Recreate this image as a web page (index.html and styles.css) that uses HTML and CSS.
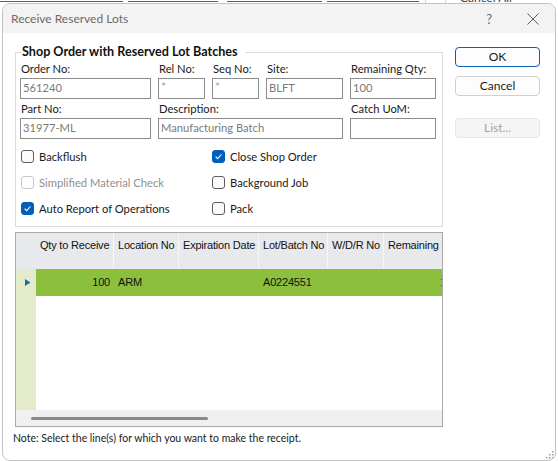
FILE: index.html
```html
<!DOCTYPE html>
<html>
<head>
<meta charset="utf-8">
<link rel="stylesheet" href="styles.css">
</head>
<body>
<div class="backdrop">
  <div class="seg seg1"></div>
  <div class="seg seg2"></div>
  <div class="seg seg3"></div>
  <div class="seg seg4"></div>
  <div class="vsep vsep1"></div>
  <div class="vsep vsep2"></div>
  <span class="cancel-all">Cancel All</span>
</div>
<div class="dialog">
  <div class="titlebar">
    <span class="title">Receive Reserved Lots</span>
    <span class="help">?</span>
    <svg class="close" width="12" height="12" viewBox="0 0 12 12"><path d="M0.5 0.5 L11.5 11.5 M11.5 0.5 L0.5 11.5" stroke="#5c5c5c" stroke-width="1" fill="none"/></svg>
  </div>
  <div class="content">
    <div class="main">
      <div class="group">
        <div class="group-title">Shop Order with Reserved Lot Batches</div>
        <div class="fields">
          <div class="lbl">Order No:</div>
          <div class="lbl">Rel No:</div>
          <div class="lbl">Seq No:</div>
          <div class="lbl">Site:</div>
          <div class="lbl">Remaining Qty:</div>
          <div class="inp">561240</div>
          <div class="inp star">*</div>
          <div class="inp star">*</div>
          <div class="inp">BLFT</div>
          <div class="inp">100</div>
          <div class="lbl lbl2">Part No:</div>
          <div class="lbl lbl2 span3">Description:</div>
          <div class="lbl lbl2">Catch UoM:</div>
          <div class="inp">31977-ML</div>
          <div class="inp span3">Manufacturing Batch</div>
          <div class="inp"></div>
        </div>
        <div class="checks">
          <div class="chk"><span class="box"></span><span>Backflush</span></div>
          <div class="chk"><span class="box on"><svg width="13" height="13" viewBox="0 0 13 13"><path d="M3.6 6.7 L5.6 8.6 L9.4 4.5" stroke="#fff" stroke-width="1.1" fill="none"/></svg></span><span>Close Shop Order</span></div>
          <div class="chk disabled"><span class="box"></span><span>Simplified Material Check</span></div>
          <div class="chk"><span class="box"></span><span>Background Job</span></div>
          <div class="chk"><span class="box on"><svg width="13" height="13" viewBox="0 0 13 13"><path d="M3.6 6.7 L5.6 8.6 L9.4 4.5" stroke="#fff" stroke-width="1.1" fill="none"/></svg></span><span>Auto Report of Operations</span></div>
          <div class="chk"><span class="box"></span><span>Pack</span></div>
        </div>
      </div>
      <div class="grid">
        <div class="grow ghead">
          <div class="c rh"></div>
          <div class="c w-qty">Qty to Receive</div>
          <div class="c w-loc">Location No</div>
          <div class="c w-exp">Expiration Date</div>
          <div class="c w-lot">Lot/Batch No</div>
          <div class="c w-wdr">W/D/R No</div>
          <div class="c w-rem">Remaining Qty</div>
        </div>
        <div class="grow gsel">
          <div class="c rh"><svg width="6" height="7" viewBox="0 0 6 7"><path d="M0 0 L5.5 3.5 L0 7 Z" fill="#1b6ea8"/></svg></div>
          <div class="c w-qty num">100</div>
          <div class="c w-loc">ARM</div>
          <div class="c w-exp"></div>
          <div class="c w-lot">A0224551</div>
          <div class="c w-wdr"></div>
          <div class="c w-rem num">100</div>
        </div>
        <div class="gbody">
          <div class="rhcol"></div>
        </div>
        <div class="hscroll"><div class="thumb"></div></div>
      </div>
      <div class="note">Note: Select the line(s) for which you want to make the receipt.</div>
    </div>
    <div class="buttons">
      <div class="btn primary">OK</div>
      <div class="btn">Cancel</div>
      <div class="btn disabled list">List...</div>
    </div>
  </div>
  <svg class="grip" width="9" height="9" viewBox="0 0 9 9">
    <rect x="7" y="1" width="1.5" height="1.5" fill="#9a9a9a"/>
    <rect x="4" y="4" width="1.5" height="1.5" fill="#9a9a9a"/>
    <rect x="7" y="4" width="1.5" height="1.5" fill="#9a9a9a"/>
    <rect x="1" y="7" width="1.5" height="1.5" fill="#9a9a9a"/>
    <rect x="4" y="7" width="1.5" height="1.5" fill="#9a9a9a"/>
    <rect x="7" y="7" width="1.5" height="1.5" fill="#9a9a9a"/>
  </svg>
</div>
</body>
</html>
```

FILE: styles.css
```css
* { box-sizing: border-box; }
body {
  margin: 0;
  width: 558px;
  height: 461px;
  overflow: hidden;
  position: relative;
  background: #ffffff;
  font-family: Lato, "Noto Sans", sans-serif;
  font-size: 11.2px;
  color: #1a1a1a;
}
.backdrop { position: absolute; left: 0; top: 0; width: 558px; height: 8px; }
.seg { position: absolute; top: 1px; height: 1px; background: #606060; }
.seg1 { left: 0; width: 123px; }
.seg2 { left: 128px; width: 90px; }
.seg3 { left: 227px; width: 95px; }
.seg4 { left: 327px; width: 92px; }
.vsep { position: absolute; top: 0; width: 1px; height: 5px; background: #d4d4d4; }
.vsep1 { left: 425px; }
.vsep2 { left: 445px; }
.cancel-all { position: absolute; left: 460px; top: -9px; font-size: 12px; color: #444; line-height: 14px; }

.dialog {
  position: absolute;
  left: 2px;
  top: 3px;
  width: 554px;
  height: 458px;
  border: 1px solid #c3c3c3;
  border-radius: 8px;
  background: #fff;
  overflow: hidden;
}
.titlebar {
  height: 29px;
  background: #f3f3f3;
  display: flex;
  align-items: center;
  padding-left: 8px;
}
.title { color: #6a6a6a; font-size: 12px; flex: 1; }
.help { color: #6a6a6a; font-size: 13px; margin-right: 35px; }
.close { margin-right: 16px; }

.content { display: flex; gap: 12px; padding: 14px 0 0 12px; }
.main { width: 428px; margin-top: 5px; }

.group {
  border: 1px solid #dcdcdc;
  height: 175px;
  padding: 0 4px;
}
.group-title {
  width: fit-content;
  margin: -9px 0 0 1px;
  padding: 0 7px 0 1px;
  background: #fff;
  font-weight: bold;
  font-size: 12.6px;
  line-height: 16px;
  color: #111;
}
.fields {
  display: grid;
  grid-template-columns: 131px 47px 47px 77px 86px;
  grid-template-rows: 17px 21px 19px 21px;
  column-gap: 7px;
  margin-top: 1px;
}
.lbl { line-height: 16px; padding-left: 1px; }
.lbl2 { padding-top: 2px; line-height: 16px; }
.span3 { grid-column: span 3; }
.inp {
  border: 1px solid #8c8c8c;
  color: #7a7a7a;
  line-height: 18px;
  padding-left: 2px;
  white-space: nowrap;
  overflow: hidden;
}
.inp.star { color: #a0a0a0; font-size: 12px; line-height: 16px; }

.checks {
  display: grid;
  grid-template-columns: 191px 1fr;
  grid-auto-rows: 26px;
  margin-top: 4px;
  padding-left: 1px;
}
.chk { display: flex; align-items: center; gap: 5px; }
.box {
  width: 13px;
  height: 13px;
  border: 1px solid #5c5c5c;
  border-radius: 3px;
  background: #fbfbfb;
  display: flex;
}
.box svg { margin: -1px; }
.box.on { background: #005fb8; border-color: #005fb8; }
.chk.disabled { color: #8f8f8f; }
.chk.disabled .box { border-color: #c8c8c8; background: #fdfdfd; }

.grid {
  margin-top: 5px;
  height: 195px;
  border: 1px solid #a9a9a9;
  display: flex;
  flex-direction: column;
  overflow: hidden;
  font-family: "Liberation Sans", Arial, sans-serif;
  font-size: 11px;
  letter-spacing: -0.2px;
  color: #111;
}
.grow { display: flex; flex-shrink: 0; }
.c { flex-shrink: 0; padding: 0 3px 0 4px; white-space: nowrap; overflow: hidden; }
.ghead { height: 36px; background: #e8e9ec; }
.ghead .c { padding-top: 5px; line-height: 14px; border-right: 1px solid #f8f8f8; }
.ghead .rh { border-right: none; }
.rh { width: 20px; }
.w-qty { width: 78px; }
.w-loc { width: 65px; }
.w-exp { width: 80px; }
.w-lot { width: 69px; }
.w-wdr { width: 56px; }
.w-rem { width: 78px; }
.gsel { height: 27px; background: #8dbf3e; }
.gsel .c { line-height: 27px; }
.gsel .num { padding-right: 4px; }
.gsel .rh { background: #e3ebcb; display: flex; align-items: center; padding-left: 9px; }
.num { text-align: right; }
.gbody { flex: 1; display: flex; }
.rhcol { width: 20px; background: #e3ebcb; }
.hscroll { height: 16px; background: #f0f0f0; padding: 7px 0 0 15px; flex-shrink: 0; }
.thumb { width: 177px; height: 3px; background: #8a8a8a; border-radius: 2px; }

.note { margin: 3px 0 0 -2px; line-height: 16px; font-size: 10.5px; color: #1a1a1a; }

.buttons { display: flex; flex-direction: column; width: 85px; }
.btn {
  height: 20px;
  border: 1px solid #d0d0d0;
  border-radius: 4px;
  background: #fdfdfd;
  text-align: center;
  line-height: 18px;
  color: #1a1a1a;
  font-size: 12px;
}
.btn + .btn { margin-top: 9px; }
.btn.primary { border-color: #0a5fb0; }
.btn.list { margin-top: 22px; }
.btn.disabled { color: #a3a3a3; background: #f5f5f5; border-color: #e6e6e6; }

.grip { position: absolute; right: 1px; bottom: 1px; }
```
